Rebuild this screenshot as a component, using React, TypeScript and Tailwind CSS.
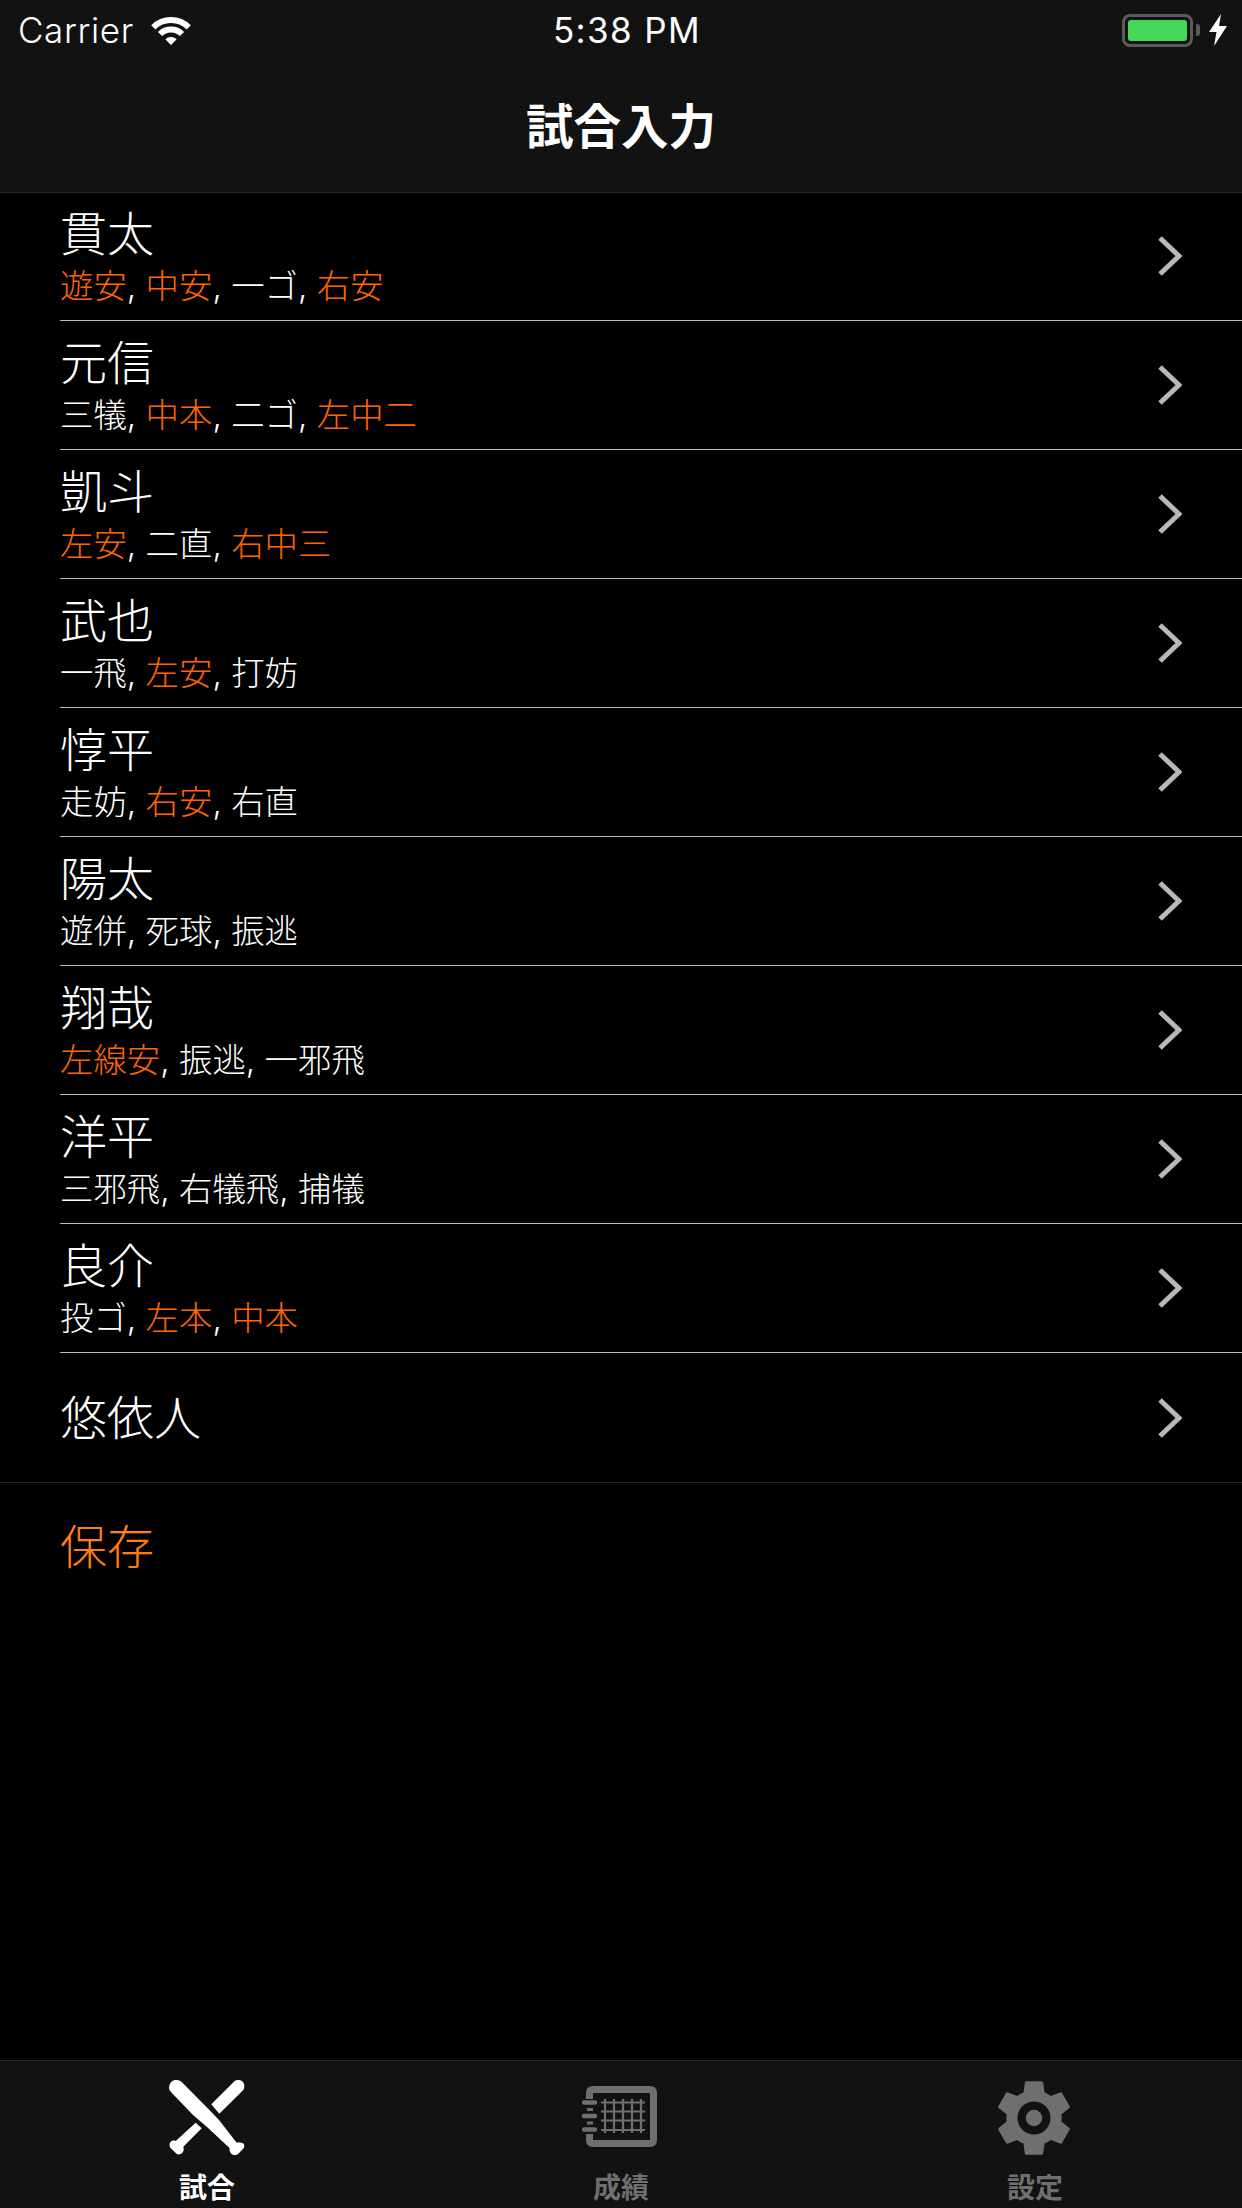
const font = "font-['Inter','Noto_Sans_CJK_JP',sans-serif]"

type Hit = [string, boolean]

const players: { name: string; hits: Hit[] }[] = [
  { name: "貫太", hits: [["遊安", true], ["中安", true], ["一ゴ", false], ["右安", true]] },
  { name: "元信", hits: [["三犠", false], ["中本", true], ["二ゴ", false], ["左中二", true]] },
  { name: "凱斗", hits: [["左安", true], ["二直", false], ["右中三", true]] },
  { name: "武也", hits: [["一飛", false], ["左安", true], ["打妨", false]] },
  { name: "惇平", hits: [["走妨", false], ["右安", true], ["右直", false]] },
  { name: "陽太", hits: [["遊併", false], ["死球", false], ["振逃", false]] },
  { name: "翔哉", hits: [["左線安", true], ["振逃", false], ["一邪飛", false]] },
  { name: "洋平", hits: [["三邪飛", false], ["右犠飛", false], ["捕犠", false]] },
  { name: "良介", hits: [["投ゴ", false], ["左本", true], ["中本", true]] },
  { name: "悠依人", hits: [] },
]

const Chevron = () => (
  <svg width="24" height="40" viewBox="0 0 24 40" fill="none" className="shrink-0">
    <path d="M2 2 L21 20 L2 38" stroke="#b9b9bd" strokeWidth="5" />
  </svg>
)

const Wifi = () => (
  <svg width="42" height="30" viewBox="0 0 42 30" fill="none" className="ml-[16px]">
    <path d="M3.3 12.3 A25 25 0 0 1 38.7 12.3" stroke="#fff" strokeWidth="6" />
    <path d="M10 19 A15.5 15.5 0 0 1 32 19" stroke="#fff" strokeWidth="6" />
    <path d="M21 30 L15.3 24.3 A8 8 0 0 1 26.7 24.3 Z" fill="#fff" />
  </svg>
)

const Battery = () => (
  <div className="flex items-center">
    <div className="w-[71px] h-[33px] rounded-[8px] border-[3px] border-[#5a5a5a] p-[3px]">
      <div className="w-full h-full rounded-[3px] bg-[#44d858]"></div>
    </div>
    <div className="ml-[3px] w-[4px] h-[12px] rounded-r-[3px] bg-[#5a5a5a]"></div>
    <svg width="18" height="32" viewBox="0 0 18 32" className="ml-[9px]">
      <path d="M12 0 L0 18 L7.5 18 L5 32 L18 12 L10 12 Z" fill="#fff" />
    </svg>
  </div>
)

const Bats = () => (
  <svg width="76" height="75" viewBox="0 0 76 75" fill="#fff">
    <path d="M0.3 9.5 C-0.8 5.5 2.5 0.2 6 0 C8.5 -0.2 11 0.5 12.7 2 L36 25.5 L50 40 L67.5 62.5 C69.5 62.8 72 62 74 63.3 C76 65 75.5 67.5 74 69 L69 74 C67 75.5 64 75.5 62 73.5 C60.5 71.5 60.5 70 60.5 68 L38 47 L24 35 L2.7 12.7 C1.5 11.5 0.6 10.5 0.3 9.5 Z" />
    <path d="M42.300 24.300 L65.700 1 C67.500 -0.300 70.500 -0.300 72.500 0.700 C75.500 2.500 76.300 6.500 74.300 10 L50.300 33.700 Z" />
    <path d="M26.700 42.700 L32.700 48.300 L14.300 66.700 C15 69 15 71 13.500 72.500 C12 74.500 9 75 7.500 73.800 L1.500 68 C0.300 66.500 0.200 63.500 1.500 62 C3 60.500 5 60.300 6.700 61 Z" />
  </svg>
)

const Notebook = () => (
  <svg width="85" height="75" viewBox="50 40 85 75" fill="none" stroke="#6f6f6f">
    <path d="M60.500 59 V53 Q60.500 49.500 64 49.500 H121 Q124.500 49.500 124.500 53 V100 Q124.500 103.500 121 103.500 H64 Q60.500 103.500 60.500 100 V94" strokeWidth="7" />
    <path d="M55 62.500 H66 M55 76 H66 M55 89.500 H66" strokeWidth="4.500" strokeLinecap="round" />
    <path d="M58 69.500 H64 M58 83 H64" strokeWidth="3" />
    <path d="M72 62.500 H116 M72 71.500 H116 M72 80.500 H116 M72 90 H116 M76 59 V93 M85 59 V93 M94 59 V93 M103 59 V93 M112 59 V93" strokeWidth="2.200" />
  </svg>
)

const Gear = () => (
  <svg width="92" height="92" viewBox="0 0 24 24" className="-my-[8.500px] -ml-[2px]">
    <path
      d="M19.14,12.94c0.04-0.3,0.06-0.61,0.06-0.94c0-0.32-0.02-0.64-0.07-0.94l2.03-1.58c0.18-0.14,0.23-0.41,0.12-0.61l-1.92-3.32c-0.12-0.22-0.37-0.29-0.59-0.22l-2.39,0.96c-0.5-0.38-1.03-0.7-1.62-0.94L14.4,2.81c-0.04-0.24-0.24-0.41-0.48-0.41h-3.84c-0.24,0-0.43,0.17-0.47,0.41L9.25,5.35C8.66,5.59,8.12,5.92,7.63,6.29L5.24,5.33c-0.22-0.08-0.47,0-0.59,0.22L2.74,8.87C2.62,9.08,2.66,9.34,2.86,9.48l2.03,1.58C4.84,11.36,4.8,11.69,4.8,12s0.02,0.64,0.07,0.94l-2.03,1.58c-0.18,0.14-0.23,0.41-0.12,0.61l1.92,3.32c0.12,0.22,0.37,0.29,0.59,0.22l2.39-0.96c0.5,0.38,1.03,0.7,1.62,0.94l0.36,2.54c0.05,0.24,0.24,0.41,0.48,0.41h3.84c0.24,0,0.44-0.17,0.47-0.41l0.36-2.54c0.59-0.24,1.13-0.56,1.62-0.94l2.39,0.96c0.22,0.08,0.47,0,0.59-0.22l1.92-3.32c0.12-0.22,0.07-0.47-0.12-0.61L19.14,12.94z"
      fill="#6f6f6f"
    />
    <circle cx="12" cy="12" r="4.300" fill="#121212" />
    <circle cx="12" cy="12" r="2.150" fill="#6f6f6f" />
  </svg>
)

const tabs = [
  { label: "試合", icon: <Bats />, active: true },
  { label: "成績", icon: <Notebook />, active: false },
  { label: "設定", icon: <Gear />, active: false },
]

const App = () => {
  return (
    <div className={`${font} bg-black text-white w-[1242px] h-[2208px] flex flex-col overflow-hidden`}>
      <header className="bg-[#121212] border-b border-[#262626] h-[193px] shrink-0">
        <div className="h-[60px] grid grid-cols-3 items-center pl-[18px] pr-[15px]">
          <div className="flex items-center">
            <span className="text-[35px] font-light leading-none tracking-[0.6px]">Carrier</span>
            <Wifi />
          </div>
          <div className="text-center text-[35px] leading-none tracking-[1.4px] pl-[9px]">5:38 PM</div>
          <div className="flex justify-end">
            <Battery />
          </div>
        </div>
        <h1 className="text-center text-[47.500px] font-bold leading-[60px] mt-[37px]">試合入力</h1>
      </header>

      <main className="flex-1 -mt-px">
        <ul className="border-b border-[#262626]">
          {players.map((p, i) => (
            <li key={p.name} className="pl-[60px] h-[129px]">
              <div className={`h-full flex items-center pr-[60px] ${i < players.length - 1 ? "border-b border-[#bdbdbd]" : ""}`}>
                <div className="flex-1 flex flex-col">
                  <div className={`text-[47px] font-light leading-[54px] ${p.hits.length > 0 ? "-mt-[1px]" : ""}`}>{p.name}</div>
                  {p.hits.length > 0 && (
                    <div className="text-[33.400px] font-light leading-[42px] mt-[4px] -mb-[3px]">
                      {p.hits.map(([txt, good], j) => (
                        <span key={j}>
                          <span className={good ? "text-[#ff6600]" : ""}>{txt}</span>
                          {j < p.hits.length - 1 && ", "}
                        </span>
                      ))}
                    </div>
                  )}
                </div>
                <Chevron />
              </div>
            </li>
          ))}
        </ul>
        <div className="pl-[60px] h-[129px] flex items-center text-[47px] font-light text-[#ff7f11]">保存</div>
      </main>

      <nav className="bg-[#121212] border-t border-[#262626] h-[148px] shrink-0 grid grid-cols-3">
        {tabs.map((t) => (
          <div key={t.label} className={`flex flex-col items-center pt-[19px] ${t.active ? "text-white" : "text-[#6f6f6f]"}`}>
            <div className="h-[75px] flex items-center justify-center">{t.icon}</div>
            <span className="text-[28px] font-bold leading-[36px] mt-[15px]">{t.label}</span>
          </div>
        ))}
      </nav>
    </div>
  )
}

export default App
